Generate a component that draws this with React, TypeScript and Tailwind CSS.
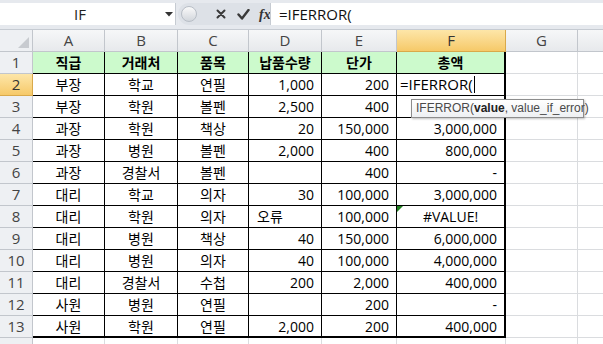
import React from 'react'

const cols = ['A', 'B', 'C', 'D', 'E', 'F', 'G', '']

const rows: string[][] = [
	['부장', '학교', '연필', '1,000', '200', ''],
	['부장', '학원', '볼펜', '2,500', '400', ''],
	['과장', '학원', '책상', '20', '150,000', '3,000,000'],
	['과장', '병원', '볼펜', '2,000', '400', '800,000'],
	['과장', '경찰서', '볼펜', '', '400', '-'],
	['대리', '학교', '의자', '30', '100,000', '3,000,000'],
	['대리', '학원', '의자', '오류', '100,000', '#VALUE!'],
	['대리', '병원', '책상', '40', '150,000', '6,000,000'],
	['대리', '병원', '의자', '40', '100,000', '4,000,000'],
	['대리', '경찰서', '수첩', '200', '2,000', '400,000'],
	['사원', '병원', '연필', '', '200', '-'],
	['사원', '학원', '연필', '2,000', '200', '400,000'],
]

const headers = ['직급', '거래처', '품목', '납품수량', '단가', '총액']

function FormulaBar() {
	return (
		<div className="flex h-[30px] bg-[#e6e9ee] pt-[3px] pb-[4px] border-b border-[#c6cbd2]">
			<div className="relative flex w-[176px] items-center bg-white border-r border-[#c6cbd2]">
				<span className="w-[160px] text-center text-[15px] text-[#222]">IF</span>
				<svg className="absolute left-[165px] top-[9px]" width="8" height="5" viewBox="0 0 8 5">
					<path d="M0 0h8L4 4.5z" fill="#333" />
				</svg>
			</div>
			<div className="flex w-[94px] items-center">
				<div className="ml-[2px] flex h-full w-full items-center rounded-l-[12px] bg-[#dde1e7]">
					<div className="ml-[3px] size-[16px] rounded-full border border-[#b8bec6] bg-gradient-to-b from-[#fafafa] to-[#d2d6dc]" />
					<svg className="ml-[19px]" width="10" height="10" viewBox="0 0 10 10">
						<path d="M1.5 1.5l7 7M8.5 1.5l-7 7" stroke="#3a3a3a" strokeWidth="2" strokeLinecap="round" />
					</svg>
					<svg className="ml-[11px]" width="13" height="11" viewBox="0 0 13 11">
						<path d="M1.5 5.5l3.5 4L11.5 1" stroke="#3a3a3a" strokeWidth="2.4" fill="none" strokeLinecap="round" strokeLinejoin="round" />
					</svg>
					<span className="ml-[9px] font-['Liberation_Serif'] text-[14px] font-bold italic text-[#333]">fx</span>
				</div>
			</div>
			<div className="flex flex-1 items-center bg-white border-l border-[#c6cbd2] pl-[8px] text-[15px] text-[#111]">
				=IFERROR(
			</div>
		</div>
	)
}

export default function App() {
	const numCell = 'justify-end pr-[7px]'
	return (
		<div className="relative h-[344px] w-[603px] overflow-hidden bg-white font-['Open_Sans','Noto_Sans_CJK_KR',sans-serif] text-[14px] text-black">
			<FormulaBar />
			<div className="grid grid-cols-[33px_72px_73px_71px_73px_75px_109px_72px_72px] auto-rows-[22px]">
				{/* column headers */}
				<div className="relative border-r border-b border-[#c2c6cc] bg-[#eef0f3]">
					<svg className="absolute right-[3px] bottom-[3px]" width="11" height="11" viewBox="0 0 11 11">
						<path d="M11 0v11H0z" fill="#c8cbd0" />
					</svg>
				</div>
				{cols.map((c, i) => (
					<div
						key={i}
						className={
							c === 'F'
								? 'flex items-center justify-center border-r border-b border-[#d9a94a] bg-gradient-to-b from-[#fde6a8] to-[#f6c968] text-[15px] text-[#333]'
								: 'flex items-center justify-center border-r border-b border-[#c2c6cc] bg-gradient-to-b from-[#f6f7f8] to-[#e7e9ec] text-[15px] text-[#444]'
						}
					>
						{c}
					</div>
				))}

				{/* row 1 */}
				<div className="flex items-center justify-center border-r border-b border-[#c2c6cc] bg-[#eef0f3] text-[15px] text-[#444]">1</div>
				{headers.map((h, i) => (
					<div
						key={h}
						className={`flex items-center justify-center bg-[#ccfacc] font-bold border-b border-black ${i === 5 ? 'border-r-2' : 'border-r'}`}
					>
						{h}
					</div>
				))}
				<div className="border-r border-b border-[#dadcdf]" />
				<div className="border-r border-b border-[#dadcdf]" />

				{rows.map((r, ri) => {
					const n = ri + 2
					const last = n === 13
					const bb = last ? 'border-b-2 border-black' : 'border-b border-black'
					return (
						<React.Fragment key={n}>
							<div
								className={
									n === 2
										? 'flex items-center justify-center border-r border-b border-[#d9a94a] bg-gradient-to-b from-[#fde6a8] to-[#f6c968] text-[15px] text-[#333]'
										: 'flex items-center justify-center border-r border-b border-[#c2c6cc] bg-[#eef0f3] text-[15px] text-[#444]'
								}
							>
								{n}
							</div>
							{r.map((v, ci) => {
								let align = 'justify-center'
								if (ci === 3 || ci === 4 || ci === 5) align = numCell
								if (v === '오류') align = 'justify-start pl-[8px]'
								if (v === '#VALUE!') align = 'justify-center'
								return (
									<div
										key={ci}
										className={`relative flex items-center border-r border-black ${bb} ${ci === 5 ? 'border-r-2' : ''} ${align}`}
									>
										{n === 2 && ci === 5 ? (
											<span className="flex w-full items-center pl-[3px] text-[15px]">
												=IFERROR(<span className="ml-[1px] h-[17px] w-px bg-black" />
											</span>
										) : (
											v
										)}
										{v === '#VALUE!' && (
											<svg className="absolute left-0 top-0" width="6" height="6" viewBox="0 0 6 6">
												<path d="M0 0h6L0 6z" fill="#208020" />
											</svg>
										)}
									</div>
								)
							})}
							<div className="border-r border-b border-[#dadcdf]" />
							<div className="border-r border-b border-[#dadcdf]" />
						</React.Fragment>
					)
				})}

				{/* row 14, only its top shows */}
				<div className="border-r border-b border-[#c2c6cc] bg-[#eef0f3]" />
				{cols.map((_, i) => (
					<div key={i} className="border-r border-b border-[#dadcdf]" />
				))}
			</div>

			{/* function tooltip */}
			<div className="absolute left-[411px] top-[99px] h-[19px] w-[173px] whitespace-nowrap border border-[#8d8d8d] bg-gradient-to-b from-white to-[#eef0f3] pl-[4px] font-['Liberation_Sans',sans-serif] text-[12px] leading-[17px] text-[#4a4a4a] shadow-[1px_1px_2px_rgba(0,0,0,0.25)]">
				IFERROR(<b className="text-[#222]">value</b>, value_if_error)
			</div>
		</div>
	)
}
